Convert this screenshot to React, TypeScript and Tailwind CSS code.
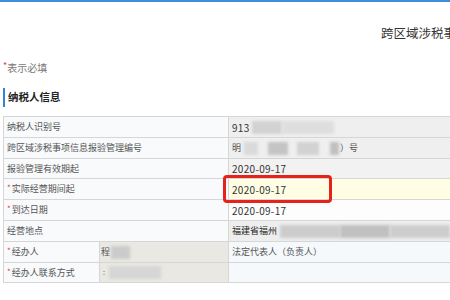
import React from "react";

const font = { fontFamily: '"Noto Sans CJK SC", "Noto Sans", sans-serif' };

function Star() {
  return <span className="text-[#e53935] text-[8px] mr-[1px] relative top-[-1px]">*</span>;
}

function Blur({ w, c, ml = 0 }: { w: number; c: string; ml?: number }) {
  return (
    <span
      className="inline-block h-[13px] blur-[1.5px] align-middle"
      style={{ width: w, background: c, marginLeft: ml }}
    />
  );
}

function Date({ v }: { v: string }) {
  return <span className="text-[10px] tracking-[0.3px] text-[#333]">{v}</span>;
}

type Row = {
  label: string;
  star?: boolean;
  h: string;
  bg: string;
  value: React.ReactNode;
};

export default function App() {
  const rows: Row[] = [
    {
      label: "纳税人识别号",
      h: "h-[21px]",
      bg: "bg-[#efefef]",
      value: (
        <span className="flex items-center">
          <Date v="913" />
          <Blur w={30} c="#d2d2d2" ml={2} />
          <Blur w={52} c="#dedede" />
        </span>
      ),
    },
    {
      label: "跨区域涉税事项信息报验管理编号",
      h: "h-[21px]",
      bg: "bg-[#efefef]",
      value: (
        <span className="flex items-center">
          <span>明</span>
          <Blur w={14} c="#dadada" ml={3} />
          <Blur w={20} c="#c4c4c4" ml={10} />
          <Blur w={22} c="#d2d2d2" ml={9} />
          <Blur w={9} c="#c0c0c0" ml={11} />
          <span className="ml-[1px]">）号</span>
        </span>
      ),
    },
    {
      label: "报验管理有效期起",
      h: "h-[20px]",
      bg: "bg-[#f2f2f2]",
      value: <Date v="2020-09-17" />,
    },
    {
      label: "实际经营期间起",
      star: true,
      h: "h-[21px]",
      bg: "bg-[#fffde3]",
      value: <Date v="2020-09-17" />,
    },
    {
      label: "到达日期",
      star: true,
      h: "h-[21px]",
      bg: "bg-[#fdfdfd]",
      value: <Date v="2020-09-17" />,
    },
    {
      label: "经营地点",
      h: "h-[21px]",
      bg: "bg-[#eeeeee]",
      value: (
        <span className="flex items-center">
          <span className="text-[#222]">福建省福州</span>
          <Blur w={60} c="#cccccc" ml={3} />
          <Blur w={50} c="#c0c0c0" />
          <Blur w={60} c="#cdcdcd" />
        </span>
      ),
    },
  ];

  return (
    <div
      className="relative w-[450px] h-[300px] overflow-hidden bg-white text-[9px] text-[#555]"
      style={font}
    >
      <div className="h-[2px] bg-[#3b8fdc]" />
      <div className="h-[50px] pt-[24px] pl-[381px] whitespace-nowrap overflow-hidden">
        <div className="text-[12.5px] leading-[14px] text-[#333]">跨区域涉税事项报验管理</div>
      </div>
      <div className="h-[30px] flex items-center pl-[3px] text-[10px] text-[#777]">
        <span className="text-[#e53935] text-[9px] relative top-[-1px]">*</span>
        <span>表示必填</span>
      </div>
      <div className="h-[30px] flex items-center pl-[3px]">
        <div className="w-[2px] h-[19px] bg-[#2f86d6]" />
        <div className="ml-[3px] text-[10.5px] font-bold text-[#222]">纳税人信息</div>
      </div>
      <div className="mt-[4px] ml-[3px] w-[500px] border-l border-t border-[#d6d6d6]">
        {rows.map((r) => (
          <div key={r.label} className={`flex ${r.h}`}>
            <div className="w-[225px] shrink-0 border-r border-b border-[#d6d6d6] bg-[#f8fafc] flex items-center pl-[3px]">
              {r.star && <Star />}
              <span>{r.label}</span>
            </div>
            <div className={`flex-1 border-r border-b border-[#d6d6d6] ${r.bg} flex items-center pl-[3px] whitespace-nowrap`}>
              {r.value}
            </div>
          </div>
        ))}
        <div className="flex h-[21px]">
          <div className="w-[96px] shrink-0 border-r border-b border-[#d6d6d6] bg-[#f8fafc] flex items-center pl-[3px]">
            <Star />
            <span>经办人</span>
          </div>
          <div className="w-[129px] shrink-0 border-r border-b border-[#d6d6d6] bg-[#e9e8e2] flex items-center pl-[1px]">
            <span>程</span>
            <Blur w={19} c="#cbcbcb" ml={1} />
          </div>
          <div className="flex-1 border-r border-b border-[#d6d6d6] bg-[#f6f9fc] flex items-center pl-[3px]">
            法定代表人（负责人）
          </div>
        </div>
        <div className="flex h-[20px]">
          <div className="w-[96px] shrink-0 border-r border-b border-[#d6d6d6] bg-[#f8fafc] flex items-center pl-[3px]">
            <Star />
            <span>经办人联系方式</span>
          </div>
          <div className="w-[129px] shrink-0 border-r border-b border-[#d6d6d6] bg-[#e9e8e2] flex items-center pl-[3px]">
            <span className="text-[7px]">:</span>
            <Blur w={52} c="#d6d6d6" ml={4} />
          </div>
          <div className="flex-1 border-r border-b border-[#d6d6d6] bg-[#f6f9fc]" />
        </div>
      </div>
      <div className="absolute left-[223px] top-[175px] w-[109px] h-[28px] border-[3.5px] border-[#e5231b] rounded-[4px]" />
    </div>
  );
}
